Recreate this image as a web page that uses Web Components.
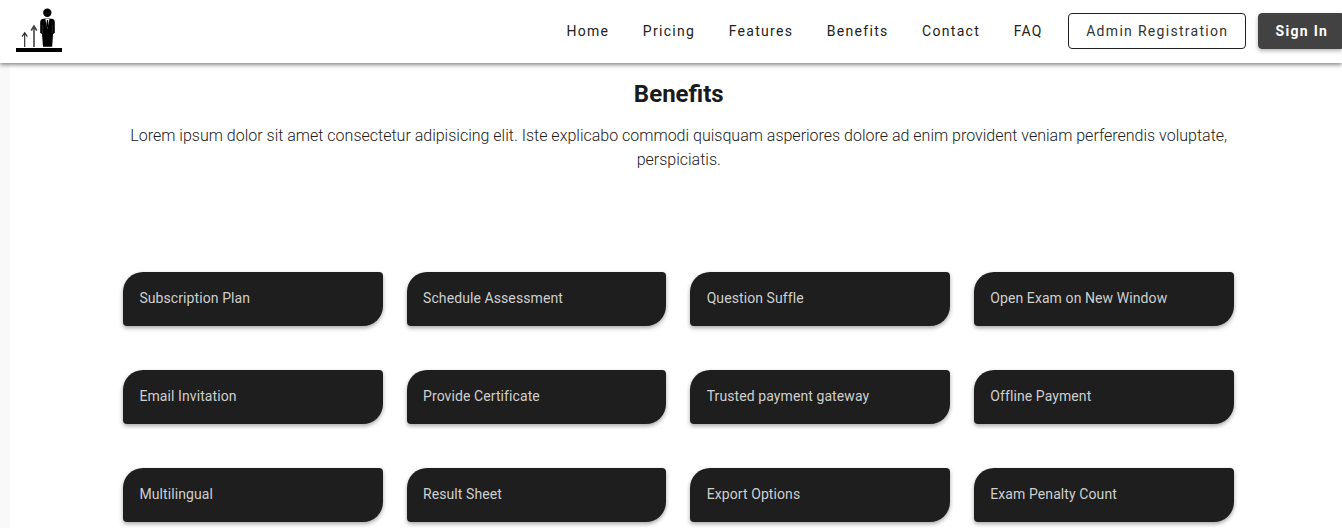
<!DOCTYPE html>
<html>
<head>
<meta charset="utf-8">
<title>Benefits</title>
<style>
    html, body { margin: 0; height: 100%; overflow: hidden; background: #f9f9f9; }
    body { font-family: Roboto, "Liberation Sans", sans-serif; }
</style>
</head>
<body>
<top-nav>
    <nav-link>Home</nav-link>
    <nav-link>Pricing</nav-link>
    <nav-link>Features</nav-link>
    <nav-link>Benefits</nav-link>
    <nav-link>Contact</nav-link>
    <nav-link>FAQ</nav-link>
    <nav-button>Admin Registration</nav-button>
    <nav-button primary>Sign In</nav-button>
</top-nav>
<benefits-section heading="Benefits">
    <span slot="intro">Lorem ipsum dolor sit amet consectetur adipisicing elit. Iste explicabo commodi quisquam asperiores dolore ad enim provident veniam perferendis voluptate, perspiciatis.</span>
    <benefit-card>Subscription Plan</benefit-card>
    <benefit-card>Schedule Assessment</benefit-card>
    <benefit-card>Question Suffle</benefit-card>
    <benefit-card>Open Exam on New Window</benefit-card>
    <benefit-card>Email Invitation</benefit-card>
    <benefit-card>Provide Certificate</benefit-card>
    <benefit-card>Trusted payment gateway</benefit-card>
    <benefit-card>Offline Payment</benefit-card>
    <benefit-card>Multilingual</benefit-card>
    <benefit-card>Result Sheet</benefit-card>
    <benefit-card>Export Options</benefit-card>
    <benefit-card>Exam Penalty Count</benefit-card>
</benefits-section>

<script>
// top bar with logo on the left, links and buttons on the right
class TopNav extends HTMLElement {
    constructor() {
        super();
        this.attachShadow({ mode: 'open' });
        this.shadowRoot.innerHTML = `
            <style>
                :host {
                    display: flex;
                    align-items: center;
                    justify-content: space-between;
                    position: relative;
                    z-index: 2;
                    box-sizing: border-box;
                    height: 63px;
                    padding-bottom: 1px;
                    background: #fff;
                    box-shadow: 0 2px 4px rgba(0,0,0,.45);
                }
                svg { display: block; align-self: flex-start; margin-left: 15px; }
                .links { display: flex; align-items: center; }
            </style>
            <svg width="50" height="62" viewBox="15 0 50 62">
                <rect x="16" y="48" width="46" height="4" fill="#000"/>
                <path d="M24.700 47V33M22 36.600l2.700-3.800 2.700 3.800" fill="none" stroke="#222" stroke-width="1.100"/>
                <path d="M34 47V26M31.200 30.500l2.800-4.500 2.800 4.500" fill="none" stroke="#444" stroke-width="1.600"/>
                <circle cx="47.300" cy="12.700" r="4.200" fill="#000"/>
                <path d="M42 19l4-.5h3l4 .5q1.800.8 1.800 3v11l-1.800 1-.8 12.800h-9.200l-1-12.800-1.800-1V22q0-2.200 1.800-3z" fill="#000"/>
                <path d="M45.300 18.800h4.200l-2.100 10.200z" fill="#fff"/>
                <path d="M46.800 20h1.300l.3 6-1 2-1-2z" fill="#000"/>
                <path d="M42.700 25v8M52.300 25v8" stroke="#555" stroke-width=".5"/>
            </svg>
            <div class="links"><slot></slot></div>
        `;
    }
}

class NavLink extends HTMLElement {
    constructor() {
        super();
        this.attachShadow({ mode: 'open' });
        this.shadowRoot.innerHTML = `
            <style>
                :host {
                    display: block;
                    margin-right: 33.500px;
                    font-size: 14px;
                    font-weight: 400;
                    letter-spacing: 1.300px;
                    color: #212121;
                    white-space: nowrap;
                }
                :host(:nth-of-type(6)) { margin-right: 25.200px; }
            </style>
            <slot></slot>
        `;
    }
}

class NavButton extends HTMLElement {
    constructor() {
        super();
        this.attachShadow({ mode: 'open' });
        this.shadowRoot.innerHTML = `
            <style>
                :host {
                    display: flex;
                    align-items: center;
                    box-sizing: border-box;
                    height: 36px;
                    padding: 0 16.600px 0 17.200px;
                    margin-right: 12px;
                    background: #fff;
                    border: 1px solid #212121;
                    border-radius: 4px;
                    font-size: 14px;
                    letter-spacing: 1.300px;
                    color: #333;
                    white-space: nowrap;
                }
                :host([primary]) {
                    margin-right: 0;
                    padding: 0 12.800px 0 16.500px;
                    background: #424242;
                    border-color: #424242;
                    color: #fff;
                    font-weight: 700;
                    box-shadow: 0 2px 4px rgba(0,0,0,.3);
                    border-radius: 4px 0 0 4px;
                }
            </style>
            <slot></slot>
        `;
    }
}

class BenefitsSection extends HTMLElement {
    constructor() {
        super();
        this.attachShadow({ mode: 'open' });
        this.shadowRoot.innerHTML = `
            <style>
                :host {
                    display: block;
                    height: 465px;
                    margin-left: 10px;
                    padding: 0 108.500px 0 113px;
                    background: #fff;
                    color: #212121;
                    text-align: center;
                }
                h2 {
                    margin: 0;
                    padding: 16px 0 0 1px;
                    font-size: 24px;
                    line-height: 30px;
                    font-weight: 700;
                    color: #1a1a1a;
                }
                p {
                    margin: 15px 0 0;
                    padding-left: 1px;
                    font-size: 16px;
                    line-height: 24px;
                    font-weight: 300;
                }
                .grid {
                    display: grid;
                    grid-template-columns: repeat(4, 1fr);
                    column-gap: 24px;
                    row-gap: 44px;
                    margin-top: 100px;
                    text-align: left;
                }
            </style>
            <h2></h2>
            <p><slot name="intro"></slot></p>
            <div class="grid"><slot></slot></div>
        `;
    }

    connectedCallback() {
        this.shadowRoot.querySelector('h2').textContent = this.getAttribute('heading');
    }
}

class BenefitCard extends HTMLElement {
    constructor() {
        super();
        this.attachShadow({ mode: 'open' });
        this.shadowRoot.innerHTML = `
            <style>
                :host {
                    display: flex;
                    align-items: center;
                    box-sizing: border-box;
                    height: 54px;
                    padding: 0 0 2px 16.400px;
                    background: #1e1e1e;
                    border-radius: 20px 4px 20px 4px;
                    box-shadow: 0 2px 4px rgba(0,0,0,.35);
                    font-size: 14px;
                    font-weight: 400;
                    letter-spacing: .09px;
                    color: #cfcfcf;
                }
            </style>
            <slot></slot>
        `;
    }
}

customElements.define('top-nav', TopNav);
customElements.define('nav-link', NavLink);
customElements.define('nav-button', NavButton);
customElements.define('benefits-section', BenefitsSection);
customElements.define('benefit-card', BenefitCard);
</script>
</body>
</html>
